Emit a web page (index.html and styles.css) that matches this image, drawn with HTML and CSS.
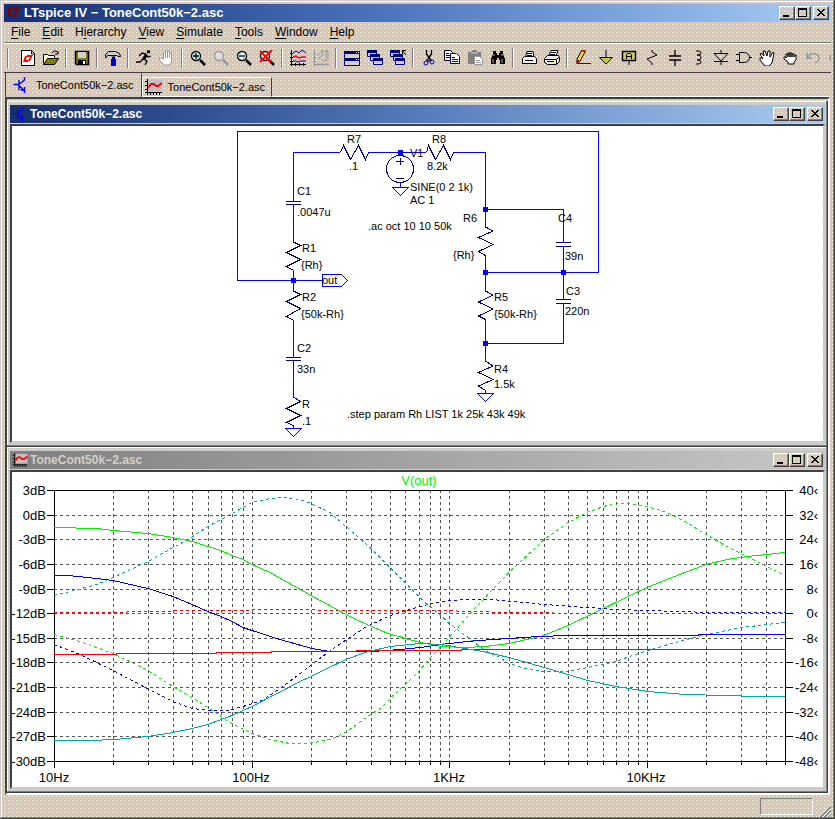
FILE: index.html
```html
<!DOCTYPE html>
<html lang="en">
<head>
<meta charset="utf-8">
<title>LTspice IV - ToneCont50k-2.asc</title>
<link rel="stylesheet" href="styles.css">
</head>
<body>
<svg class="defs" aria-hidden="true">
  <symbol id="min" viewBox="0 0 12 10"><path d="M2 7h6v2H2z"/></symbol>
  <symbol id="max" viewBox="0 0 12 10"><path fill-rule="evenodd" d="M1 0h9v9H1zM2 2v6h7V2z"/></symbol>
  <symbol id="close" viewBox="0 0 12 10"><path d="M2 1h2v1h1v1h2V2h1V1h2v1H9v1H8v1H7v1h1v1h1v1h1v1H8V7H7V6H5v1H4v1H2V7h1V6h1V5h1V4H4V3H3V2H2z"/></symbol>
  <symbol id="transistor" viewBox="0 0 16 16"><path d="M0 7.500h5M5.500 3v10M6 7l5-4V0M6 9l5 5v2M7 13h4v-3" fill="none" stroke="#00f" stroke-width="1.4"/></symbol>
  <symbol id="wave" viewBox="0 0 17 16"><path fill="#c0c0c0" d="M3 1h14v11H3z"/><path d="M2.500 0v16M0 13.500h17M0 2.500h3M0 6.500h3M0 10.500h3M5.500 13v3M8.500 13v3M11.500 13v3M14.500 13v3" stroke="#000" fill="none"/><path d="M3 9l3-4h3l2 2h2l4-3" fill="none" stroke="#f00" stroke-width="2"/></symbol>
  <symbol id="lens" viewBox="0 0 16 16"><circle cx="6" cy="6" r="4.500" fill="#fff" stroke="#000" stroke-width="1.300"/><path d="M3 4h2M7 8h2M3 7h1M8 4h1" stroke="#0cc"/><path d="M10 10l5 5" stroke="#000" stroke-width="2.500"/></symbol>
</svg>
<div class="window">
  <header class="title title-main">
    <svg class="logo" viewBox="0 0 16 14"><path d="M3 1h3L4 8h4l-1 2H1zM6 1h9l-1 2h-2l-2 8H8l2-8H6z" fill="#800000"/></svg>
    <h1>LTspice IV − ToneCont50k−2.asc</h1>
    <div class="controls">
      <button aria-label="Minimize"><svg><use href="#min"/></svg></button>
      <button aria-label="Maximize"><svg><use href="#max"/></svg></button>
      <button aria-label="Close" class="close"><svg><use href="#close"/></svg></button>
    </div>
  </header>
  <nav class="menu">
    <button><u>F</u>ile</button>
    <button><u>E</u>dit</button>
    <button>H<u>i</u>erarchy</button>
    <button><u>V</u>iew</button>
    <button><u>S</u>imulate</button>
    <button><u>T</u>ools</button>
    <button><u>W</u>indow</button>
    <button><u>H</u>elp</button>
  </nav>
  <div class="toolbar">
    <i class="grip"></i>
    <button aria-label="New schematic"><svg viewBox="0 0 16 16"><path d="M1.500.500h10l3 3v12h-13z" fill="#fff" stroke="#000"/><path d="M11.500 1v3h3" fill="none" stroke="#000"/><path d="M5 6h2l-1 4h3l-1 2H3zM7 5h6l-1 2-2 4H8l2-4H7z" fill="#f00"/></svg></button>
    <button aria-label="Open"><svg viewBox="0 0 16 16"><path d="M.500 13.500v-9h4l1 1h6v3" fill="#ffc" stroke="#000"/><path d="M.500 14.500l4-6h11l-4 6z" fill="#808000" stroke="#000"/><path d="M9 3l2-2h2l2 2M15 1v3h-3" fill="none" stroke="#000"/></svg></button>
    <i class="sep"></i>
    <button aria-label="Save"><svg viewBox="0 0 16 16"><path d="M1.500 1.500h13v13h-12l-1-1z" fill="#808000" stroke="#000" stroke-width="1.500"/><path fill="#d4d0c8" d="M4 2h8v6H4z"/><path d="M4 10h8v5H4z"/><path fill="#fff" d="M9 11h2v3H9z"/></svg></button>
    <i class="sep"></i>
    <button aria-label="Control panel"><svg viewBox="0 0 16 16"><path d="M.500 4.500l3-3h7l4 2 1 3h-2l-2-1h-9l-1 2h-1z" fill="#ccc" stroke="#000"/><path d="M6.500 6h4" stroke="#000"/><path d="M7 7h3v2h1v7H6V9h1z" fill="#0000c0"/></svg></button>
    <i class="sep"></i>
    <button aria-label="Run"><svg viewBox="0 0 16 16"><circle cx="12.500" cy="1.800" r="1.700"/><path d="M10 4L7 9l4 2-2 4M7 9l-3 3H0M10 4L6 3 3 6M9 5l3 2 3-1" fill="none" stroke="#000" stroke-width="1.300"/><path d="M9 4l3 1-3 5-3-1z"/></svg></button>
    <button aria-label="Halt" disabled><svg viewBox="0 0 16 16"><path d="M4.500 9V3h2v5V1h2v7V1h2v7V3h2v9l-2 3h-5l-5-5V8h2z" fill="#fff" stroke="#999"/></svg></button>
    <i class="sep"></i>
    <button aria-label="Zoom in"><svg viewBox="0 0 16 16"><use href="#lens"/><path d="M3 6h6M6 3v6" stroke="#000" stroke-width="1.300"/></svg></button>
    <button aria-label="Pan" disabled><svg viewBox="0 0 16 16"><circle cx="6" cy="6" r="4.500" fill="#ddd" stroke="#999" stroke-width="1.300"/><path d="M10 10l5 5" stroke="#999" stroke-width="2.500"/><path d="M3 5l2-2" stroke="#fff"/></svg></button>
    <button aria-label="Zoom out"><svg viewBox="0 0 16 16"><use href="#lens"/><path d="M3 6h6" stroke="#000" stroke-width="1.300"/></svg></button>
    <button aria-label="Zoom full"><svg viewBox="0 0 16 16"><use href="#lens"/><path d="M1 1l11 11M13 0L1 12" stroke="#f00" stroke-width="1.800"/></svg></button>
    <i class="sep"></i>
    <button aria-label="Autorange"><svg viewBox="0 0 16 16"><path d="M1.500 0v16M0 14.500h16M0 3.500h3M0 7.500h3M0 11.500h3M5.500 13v3M9.500 13v3M13.500 13v3" stroke="#000" fill="none"/><path d="M3 3l3-2 3 2 3-3 4 3M3 11h3l2 1 2-1h6" fill="none" stroke="#00a"/><path d="M3 7l3-1 3 2 3-1h4" fill="none" stroke="#f00" stroke-width="1.500"/></svg></button>
    <button aria-label="Plot settings" disabled><svg viewBox="0 0 16 16"><path d="M1.500 0v16M0 14.500h16M0 3.500h3M0 7.500h3M0 11.500h3M5.500 13v3M9.500 13v3M13.500 13v3M4 6l5-5 1 4-4 3 4 3h3V1h2v10M8 1h7" stroke="#999" fill="none"/></svg></button>
    <i class="sep"></i>
    <button aria-label="Tile"><svg viewBox="0 0 16 16"><path d="M.500 1.500h15v14H.500z" fill="#d4d0c8" stroke="#000080"/><path d="M0 1h16v3H0zM0 8h16v3H0z" fill="#000080"/><path d="M12 2h1v1h-1zM14 2h1v1h-1zM12 9h1v1h-1zM14 9h1v1h-1z" fill="#fff"/></svg></button>
    <button aria-label="Cascade"><svg viewBox="0 0 16 16"><path d="M.500.500h9v6h-9zM3.500 4.500h9v6h-9zM6.500 8.500h9v6h-9z" fill="#d4d0c8" stroke="#000080"/><path d="M0 0h10v3H0zM3 4h10v3H3zM6 8h10v3H6z" fill="#000080"/></svg></button>
    <button aria-label="Close all"><svg viewBox="0 0 16 16"><path d="M.500.500h9v6h-9zM3.500 4.500h9v6h-9zM5.500 8.500h9v6h-9z" fill="#d4d0c8" stroke="#000080"/><path d="M0 0h10v3H0zM3 4h9v3H3zM5 8h9v3H5z" fill="#000080"/><path d="M12.500 4V.500h4M12 0l4 5" fill="none" stroke="#000"/></svg></button>
    <i class="sep"></i>
    <button aria-label="Cut"><svg viewBox="0 0 16 16"><path d="M5.500 0v4l5 7M10.500 0v4l-5 7" fill="none" stroke="#000" stroke-width="1.300"/><path d="M6 9l2 3M10 9l-2 2" stroke="#000080"/><circle cx="5" cy="13" r="2" fill="none" stroke="#0000a0"/><circle cx="11" cy="12" r="2" fill="none" stroke="#0000a0"/></svg></button>
    <button aria-label="Copy"><svg viewBox="0 0 16 16"><path d="M.500.500h6l2 2v8h-8z" fill="#fff" stroke="#000"/><path d="M2 3.500h3M2 5.500h5M2 7.500h5" stroke="#000"/><path d="M6.500 3.500h6l3 3v7h-9z" fill="#fff" stroke="#000080"/><path d="M8 7.500h3M8 9.500h6M8 11.500h6" stroke="#000080"/></svg></button>
    <button aria-label="Paste" disabled><svg viewBox="0 0 16 16"><path d="M1 2h3l2-2h3l2 2h3v5H8v7H1z" fill="#808080"/><path d="M4 3h7" stroke="#ccc"/><path d="M7.500 6.500h5l3 3v5h-8z" fill="#fff" stroke="#999"/><path d="M9 10.500h4M9 12.500h5" stroke="#999"/></svg></button>
    <button aria-label="Find"><svg viewBox="0 0 16 16"><path d="M3 1h3v2h1v2h2V3h1V1h3v3l2 5v5h-5v-4H9V8H7v2H6v4H1V9l2-5z"/><path d="M4 4v2M12 4v2M3 9v4M12 9v4" stroke="#fff" stroke-width=".7"/></svg></button>
    <i class="sep"></i>
    <button aria-label="Print"><svg viewBox="0 0 16 16"><path d="M4.500 7L6 1.500h6L13 7" fill="#fff" stroke="#000"/><path d="M1.500 8.500l2-2h10l2 2v5h-14z" fill="#eee" stroke="#000"/><path d="M1 13.500h14M4 10.500h8M6 3.500h5M6 5.500h5" stroke="#000"/></svg></button>
    <button aria-label="Print setup"><svg viewBox="0 0 16 16"><path d="M4.500 6L7 .500h7L12 6" fill="#fff" stroke="#000"/><path d="M.500 8.500l3-3h11l1 2v4l-3 3h-9l-3-2z" fill="#eee" stroke="#000"/><path d="M1 9.500h11l3-2M12.500 10v4M3 11.500h7M7 2.500h5M6 4.500h5" stroke="#000" fill="none"/><path d="M9 12h3v2H9z" fill="#ff0"/></svg></button>
    <i class="sep"></i>
    <button aria-label="Wire"><svg viewBox="0 0 16 16"><path d="M7 0h3v2L5 11l-3 2 0-4z" fill="#fd0" stroke="#000"/><path d="M7 0h3v2H8zM2 10h2v2l-3 2z" fill="#c00"/><path d="M2 13.500h14" stroke="#00f"/></svg></button>
    <button aria-label="Ground"><svg viewBox="0 0 16 16"><path d="M8 0v7" stroke="#000"/><path d="M1.500 7.500h13L8 14z" fill="#cc3" stroke="#000"/></svg></button>
    <button aria-label="Label net"><svg viewBox="0 0 16 16"><path d="M1.500 1.500h13v9h-13z" fill="#cc6" stroke="#000" stroke-width="1.500"/><path d="M8 11v4M5.500 9V4.500l1-1h3l1 1V9M6 6.500h4" fill="none" stroke="#000"/></svg></button>
    <button aria-label="Resistor"><svg viewBox="0 0 16 16"><path d="M8 0v2l5 3-10 4 5 4v2" fill="none" stroke="#000"/></svg></button>
    <button aria-label="Capacitor"><svg viewBox="0 0 16 16"><path d="M8 0v6M2 6h12M2 10h12M8 10v6" stroke="#000" stroke-width="1.300"/></svg></button>
    <button aria-label="Inductor"><svg viewBox="0 0 16 16"><path d="M6 1h2q3 0 3 2t-3 2H7h1q3 0 3 2.500T8 10H7h1q3 0 3 2t-3 2H6" fill="none" stroke="#000"/></svg></button>
    <button aria-label="Diode"><svg viewBox="0 0 16 16"><path d="M8 0v3M8 12v3M1 3.500h14L8 11zM1 11.500h14" fill="none" stroke="#000"/></svg></button>
    <button aria-label="Component"><svg viewBox="0 0 16 16"><path d="M3.500 2.500h5q5 1 5 5t-5 5h-5zM0 4.500h3M0 10.500h3M13 7.500h3" fill="none" stroke="#000"/></svg></button>
    <button aria-label="Move"><svg viewBox="0 0 16 16"><path d="M4 9L1 4l1-1 3 3-1-5h2l2 5 1-5h2v6l3-5 1 1-1 5-1 5-3 3H6L1 10V8h2z" fill="#fff" stroke="#000"/></svg></button>
    <button aria-label="Drag"><svg viewBox="0 0 16 16"><path d="M4 8V4h2v3V3h2v4V3h2v4V4h2v3l1-2h1v5l-2 2v2H6v-2L2 9V7h2z" fill="#fff" stroke="#000"/></svg></button>
    <button aria-label="Undo" disabled><svg viewBox="0 0 16 16"><path d="M2 3v5h5M2 8q4-6 9-4t2 7l-3 2" fill="none" stroke="#999" stroke-width="1.500"/></svg></button>
    <button aria-label="Redo" disabled><svg viewBox="0 0 16 16"><path d="M14 3v5H9M14 8Q10 2 5 4t-2 7l3 2" fill="none" stroke="#999" stroke-width="1.500"/></svg></button>
  </div>
  <div class="tabs">
    <button class="tab tab-active"><svg><use href="#transistor"/></svg>ToneCont50k−2.asc</button>
    <button class="tab"><svg><use href="#wave"/></svg>ToneCont50k−2.asc</button>
  </div>
  <main class="mdi">
    <section class="child">
      <header class="title">
        <svg class="logo"><use href="#transistor"/></svg>
        <h2>ToneCont50k−2.asc</h2>
        <div class="controls">
          <button aria-label="Minimize"><svg><use href="#min"/></svg></button>
          <button aria-label="Maximize"><svg><use href="#max"/></svg></button>
          <button aria-label="Close" class="close"><svg><use href="#close"/></svg></button>
        </div>
      </header>
      <div class="canvas">
        <svg viewBox="12 126 811 315" role="img" aria-label="Schematic">
          <g class="part">
            <path d="M340.500 152.500L343.500 145.500L350.500 159.500L358.500 145.500L365.500 159.500L368.500 152.500M426.500 152.500L428.500 145.500L435.500 159.500L443.500 145.500L450.500 159.500L453.500 152.500"/>
            <path d="M293.500 241V242L300.500 245.500L286.500 252.500L300.500 259.500L286.500 266.500L293.500 270.500M293.500 291L300.500 294.500L286.500 301.500L300.500 308.500L286.500 316.500L293.500 320.500M293.500 397L300.500 401.500L286.500 408.500L300.500 415.500L286.500 422.500L293.500 425.500"/>
            <path d="M485.500 227L493 231L478.500 237.500L493 244.500L478.500 251.500L485.500 255.500M485.500 291L493 295L478.500 302L493 309L478.500 316L485.500 319.500M485.500 361L493 366L478.500 372.500L493 379.500L478.500 386L485.500 390.500"/>
            <path d="M286 201.500H301M286 204.500H301M286 357.500H301M286 360.500H301M556 242.500H571M556 246.500H571M556 299.500H571M556 303.500H571"/>
            <circle cx="400" cy="169" r="13.500"/>
            <path d="M396 161.500H404M400.500 158V165M396 178.500H404"/>
          </g>
          <g class="wire">
            <path d="M293.500 280.500H237.500V131.500H598.500V272.500H485.500M293.500 201V152.500H340M368 152.500H426M453 152.500H485.500V227M485.500 209.500H563.500V242M563.500 246V299M485.500 255V291M563.500 303V343.500H485.500M485.500 319V361M485.500 390V393M293.500 205V241M293.500 270V291M293.500 320V357M293.500 361V397M293.500 425V428M293.500 280.500H322.500"/>
            <path d="M322.500 274.500H341.500L347.500 280.500L341.500 286.500H322.500zM477.500 393.500H493.500L485.500 401.500zM285.500 428.500H301.500L293.500 436.500zM392.500 187.500H408.500L400.500 195.500zM400.500 183V187"/>
          </g>
          <path class="node" d="M398 150h5v5h-5zM291 278h5v5h-5zM483 207h5v5h-5zM483 270h5v5h-5zM561 270h5v5h-5zM483 341h5v5h-5z"/>
          <g class="net">
            <text x="347" y="143">R7</text><text x="349" y="170">.1</text>
            <text x="432" y="143">R8</text><text x="427" y="170">8.2k</text>
            <text x="410" y="157">V1</text><text x="410" y="191">SINE(0 2 1k)</text><text x="410" y="204">AC 1</text>
            <text x="297" y="195">C1</text><text x="297" y="216">.0047u</text>
            <text x="302" y="252">R1</text><text x="301" y="269">{Rh}</text>
            <text x="322" y="284">out</text>
            <text x="302" y="301">R2</text><text x="301" y="318">{50k-Rh}</text>
            <text x="297" y="352">C2</text><text x="297" y="373">33n</text>
            <text x="302" y="408">R</text><text x="302" y="425">.1</text>
            <text x="368" y="230">.ac oct 10 10 50k</text>
            <text x="347" y="418">.step param Rh LIST 1k 25k 43k 49k</text>
            <text x="463" y="222">R6</text><text x="453" y="259">{Rh}</text>
            <text x="558" y="222">C4</text><text x="565" y="260">39n</text>
            <text x="494" y="301">R5</text><text x="494" y="318">{50k-Rh}</text>
            <text x="566" y="295">C3</text><text x="565" y="315">220n</text>
            <text x="494" y="373">R4</text><text x="494" y="388">1.5k</text>
          </g>
        </svg>
      </div>
    </section>
    <section class="child child-inactive">
      <header class="title">
        <svg class="logo"><use href="#wave"/></svg>
        <h2>ToneCont50k−2.asc</h2>
        <div class="controls">
          <button aria-label="Minimize"><svg><use href="#min"/></svg></button>
          <button aria-label="Maximize"><svg><use href="#max"/></svg></button>
          <button aria-label="Close" class="close"><svg><use href="#close"/></svg></button>
        </div>
      </header>
      <div class="canvas">
        <svg viewBox="12 472 811 315" role="img" aria-label="Plot of V(out)">
          <path class="grid" d="M54 515.500H785M54 539.500H785M54 564.500H785M54 589.500H785M54 613.500H785M54 638.500H785M54 662.500H785M54 687.500H785M54 712.500H785M54 736.500H785"/>
          <path class="grid" d="M113.500 490V761M148.500 490V761M173.500 490V761M192.500 490V761M208.500 490V761M221.500 490V761M232.500 490V761M243.500 490V761M252.500 490V761M311.500 490V761M346.500 490V761M371.500 490V761M390.500 490V761M405.500 490V761M419.500 490V761M430.500 490V761M440.500 490V761M449.500 490V761M509.500 490V761M544.500 490V761M568.500 490V761M587.500 490V761M603.500 490V761M616.500 490V761M628.500 490V761M638.500 490V761M647.500 490V761M706.500 490V761M741.500 490V761M766.500 490V761"/>
          <path class="axis" d="M54.500 490V768M785.500 490V765M47 490.500H793M47 761.500H793M47 515.500H54M47 539.500H54M47 564.500H54M47 589.500H54M47 613.500H54M47 638.500H54M47 662.500H54M47 687.500H54M47 712.500H54M47 736.500H54M785 515.500H793M785 539.500H793M785 564.500H793M785 589.500H793M785 613.500H793M785 638.500H793M785 662.500H793M785 687.500H793M785 712.500H793M785 736.500H793"/>
          <path class="axis" d="M113.500 761v4M148.500 761v4M173.500 761v4M192.500 761v4M208.500 761v4M221.500 761v4M232.500 761v4M243.500 761v4M252.500 761v7M311.500 761v4M346.500 761v4M371.500 761v4M390.500 761v4M405.500 761v4M419.500 761v4M430.500 761v4M440.500 761v4M449.500 761v7M509.500 761v4M544.500 761v4M568.500 761v4M587.500 761v4M603.500 761v4M616.500 761v4M628.500 761v4M638.500 761v4M647.500 761v7M706.500 761v4M741.500 761v4M766.500 761v4"/>
          <g class="trace" transform="translate(0 .5)">
            <polyline class="red dash" points="54,612 105,612 150,611 193,610 311,609 320,610 440,610 509,612 595,613 785,613"/>
            <polyline class="blue dash" points="54,644 80,654 113,670 149,689 173,701 192,708 213,710 228,710 243,706 262,700 283,686 312,664 333,648 353,635 365,627 390,615 420,606 432,603 450,600 470,599 493,599 509,601 527,602 543,604 560,605 587,607 617,609 647,610 677,611 713,612 785,612"/>
            <polyline class="green dash" points="54,634 80,641 113,653 148,670 160,678 173,686 192,697 217,713 228,721 252,733 270,739 290,743 310,743 333,738 347,731 372,713 382,707 393,695 418,672 428,660 442,645 457,628 470,613 487,595 509,572 527,555 544,539 560,528 568,522 587,512 595,509 607,505 620,503 630,503 647,506 667,512 685,521 706,534 727,546 747,556 767,566 783,574"/>
            <polyline class="teal dash" points="54,595 70,591 97,584 113,577 148,561 173,547 188,539 208,526 221,519 243,507 252,502 270,498 284,497 300,499 311,503 330,512 346,526 371,548 390,567 405,582 427,604 440,614 448,622 468,637 485,650 498,656 509,663 522,667 535,670 548,671 565,671 588,667 616,661 638,653 648,650 675,642 706,634 742,627 767,624 785,622"/>
            <polyline class="green" points="54,527 97,528 113,530 148,533 173,537 192,541 208,546 221,550 232,555 243,559 252,564 270,572 311,595 346,614 358,620 388,633 420,642 442,646 465,647 485,646 509,643 544,635 568,625 593,613 628,596 647,587 677,575 706,564 727,559 747,556 767,554 785,552"/>
            <polyline class="blue" points="54,575 68,575 97,578 113,580 148,588 173,596 192,604 208,611 221,616 232,621 243,627 252,630 280,639 312,648 330,651 346,651 372,651 400,649 420,647 449,643 478,640 509,638 538,636 568,635 698,635 699,634 785,634"/>
            <polyline class="red" points="54,654 116,654 117,653 216,653 217,652 271,652 272,651 356,651 357,650 461,650 462,649 785,649"/>
            <polyline class="teal" points="54,740 90,740 115,739 148,736 173,732 192,728 208,724 221,719 232,715 243,710 252,706 275,694 300,681 311,676 325,669 346,659 365,652 390,646 420,643 442,644 465,648 483,651 509,657 544,667 568,674 588,680 616,686 648,691 685,694 725,695 758,696 785,696"/>
          </g>
          <g class="labels">
            <text class="name" x="419" y="485">V(out)</text>
            <g class="end">
              <text x="46" y="495">3dB</text><text x="46" y="520">0dB</text><text x="46" y="544">-3dB</text><text x="46" y="569">-6dB</text><text x="46" y="594">-9dB</text><text x="46" y="618">-12dB</text><text x="46" y="643">-15dB</text><text x="46" y="667">-18dB</text><text x="46" y="692">-21dB</text><text x="46" y="717">-24dB</text><text x="46" y="741">-27dB</text><text x="46" y="766">-30dB</text>
              <text x="818" y="495">40‹</text><text x="818" y="520">32‹</text><text x="818" y="544">24‹</text><text x="818" y="569">16‹</text><text x="818" y="594">8‹</text><text x="818" y="618">0‹</text><text x="818" y="643">-8‹</text><text x="818" y="667">-16‹</text><text x="818" y="692">-24‹</text><text x="818" y="717">-32‹</text><text x="818" y="741">-40‹</text><text x="818" y="766">-48‹</text>
            </g>
            <g class="mid">
              <text x="54" y="782">10Hz</text><text x="251" y="782">100Hz</text><text x="449" y="782">1KHz</text><text x="646" y="782">10KHz</text>
            </g>
          </g>
        </svg>
      </div>
    </section>
  </main>
  <footer class="status">
    <div class="pane"></div>
    <svg viewBox="0 0 12 12"><path d="M0 12L12 0M4 12l8-8M8 12l4-4" stroke="#fff"/><path d="M1 12L12 1M2 12L12 2M5 12l7-7M6 12l6-6M9 12l3-3" stroke="#808080"/></svg>
  </footer>
</div>
</body>
</html>
```
FILE: styles.css
```css
:root {
  --face: #cccac6;
  --dark: #404040;
  --mid: #808080;
}
* { box-sizing: border-box; }
body {
  margin: 0;
  font: 12px/14px "Liberation Sans", sans-serif;
  color: #000;
}
button {
  font: inherit;
  color: inherit;
  background: none;
  border: 0;
  padding: 0;
}
svg { display: block; }
.defs { position: absolute; width: 0; height: 0; }
.window, .child, .controls button {
  background-color: var(--face);
  background-image:
    conic-gradient(at 1px 1px, transparent 75%, #ffffcc 0),
    conic-gradient(at 1px 1px, transparent 75%, #ffcccc 0);
  background-size: 4px 4px;
  background-position: 0 0, 2px 2px;
}
.window {
  display: flex;
  flex-direction: column;
  min-height: 100vh;
  padding: 4px 4px 2px;
  box-shadow: inset -1px -1px var(--dark), inset 1px 1px var(--face), inset -2px -2px var(--mid), inset 2px 2px #fff;
}

.title {
  display: flex;
  align-items: center;
  height: 18px;
  padding: 0 2px;
  color: #fff;
  background:
    repeating-conic-gradient(#ffffff18 0 25%, transparent 0 50%) 0 0 / 2px 2px,
    linear-gradient(90deg, #0a246a, #426cb4 45%, #6f98d4 70%, #a6caf0);
}
.title h1, .title h2 {
  margin: 0 auto 0 0;
  font-size: 13px;
  line-height: 18px;
  font-weight: bold;
  white-space: nowrap;
}
.title h2 { font-size: 12px; }
.logo { width: 16px; height: 14px; margin-right: 2px; }
.controls { display: flex; }
.controls button {
  width: 16px;
  height: 14px;
  padding: 1px;
  border: 1px solid;
  border-color: #fff var(--dark) var(--dark) #fff;
  box-shadow: inset -1px -1px var(--mid);
}
.controls svg { width: 12px; height: 10px; fill: #000; }
.controls .close { margin-left: 2px; }

.menu {
  display: flex;
  gap: 12px;
  height: 21px;
  padding: 0 7px;
  border-bottom: 1px solid var(--mid);
}
.menu u { text-underline-offset: 2px; }

.toolbar {
  display: flex;
  align-items: center;
  height: 30px;
  overflow: hidden;
  border-top: 1px solid #fff;
  border-bottom: 1px solid var(--dark);
}
.toolbar button { flex: none; width: 23px; height: 22px; }
.toolbar svg { width: 16px; height: 16px; margin: 3px auto; }
.grip, .sep {
  flex: none;
  width: 2px;
  height: 20px;
  margin: 0 3px;
  background: linear-gradient(90deg, var(--mid) 50%, #fff 50%);
}
.grip { margin: 0 7px 0 3px; }

.tabs {
  display: flex;
  align-items: flex-end;
  height: 24px;
  margin: 0 1px;
  border-left: 1px solid var(--dark);
  box-shadow: inset 0 -1px #fff;
}
.tab {
  display: flex;
  align-items: center;
  gap: 6px;
  height: 20px;
  padding: 0 6px 0 2px;
  border: 1px solid;
  border-color: #fff var(--dark) #fff #fff;
  font-size: 11px;
}
.tab svg { width: 17px; height: 16px; }
.tab-active {
  height: 24px;
  padding: 0 7px 0 6px;
  border-color: transparent var(--dark) var(--face) transparent;
}

.mdi {
  flex: 1;
  margin: 0 1px;
  padding-top: 2px;
  border: 2px solid;
  border-color: var(--dark) #fff #fff var(--dark);
}
.child {
  padding: 4px 3px;
  box-shadow: inset -1px -1px var(--dark), inset -2px -2px var(--mid), inset 1px 1px #fff;
}
.child .title { margin-bottom: 1px; }
.child-inactive .title {
  color: #d4d0c8;
  background:
    repeating-conic-gradient(#ffffff18 0 25%, transparent 0 50%) 0 0 / 2px 2px,
    linear-gradient(90deg, #7a7a7a, #c4c4c4);
}
.canvas {
  background: #fff;
  border: 2px solid;
  border-color: var(--dark) var(--face) var(--face) var(--dark);
}
.canvas svg { width: 100%; }

.wire, .part, .grid, .axis, .trace { fill: none; shape-rendering: crispEdges; }
.wire { stroke: #0000ff; }
.part { stroke: #000080; }
.node { fill: #0000ff; shape-rendering: crispEdges; }
.net { font-size: 11px; }
.grid { stroke: #555; stroke-dasharray: 3 3; }
.axis { stroke: #000; }
.dash { stroke-dasharray: 3 3; }
.red { stroke: #ff0000; }
.blue { stroke: #0000ee; }
.green { stroke: #00f000; }
.teal { stroke: #00a8a8; }
.labels { font-size: 13px; }
.name { fill: #00f000; text-anchor: middle; }
.end { text-anchor: end; }
.mid { text-anchor: middle; }

.status {
  display: flex;
  justify-content: flex-end;
  align-items: center;
  gap: 6px;
  height: 22px;
}
.status svg { align-self: flex-end; width: 12px; height: 12px; }
.pane {
  width: 53px;
  height: 17px;
  border: 1px solid;
  border-color: var(--mid) #fff #fff var(--mid);
}
```
